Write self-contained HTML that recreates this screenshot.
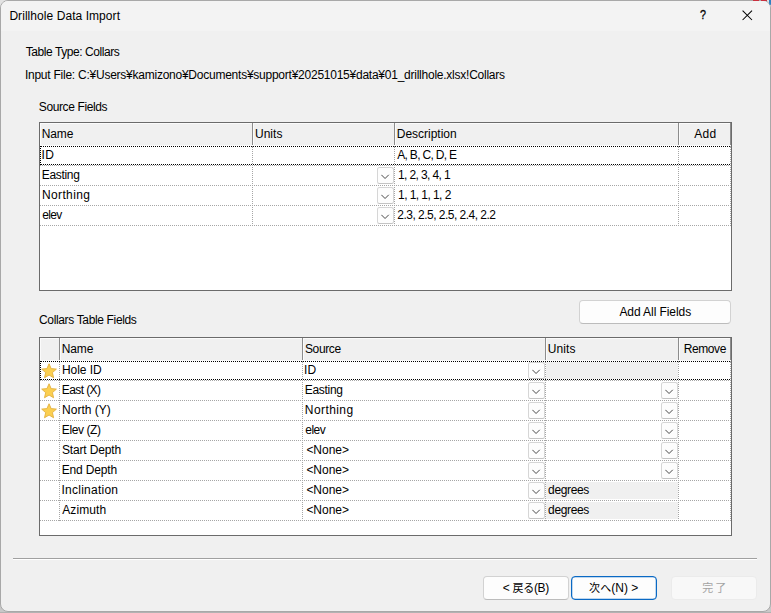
<!DOCTYPE html>
<html lang="ja">
<head>
<meta charset="utf-8">
<title>Drillhole Data Import</title>
<style>
*{box-sizing:border-box;margin:0;padding:0}
html,body{width:771px;height:613px;overflow:hidden;background:#e2e2e2}
body{font-family:"Liberation Sans","Noto Sans CJK JP",sans-serif;font-size:12px;color:#000;position:relative}
.win{position:absolute;left:0;top:0;width:771px;height:612px;background:#f0f0f0;border:1px solid #a8a8a8;border-radius:8px;overflow:hidden}
.shadow{position:absolute;left:0;top:603px;width:771px;height:10px;background:linear-gradient(to bottom,#c8c8c8 0,#c8c8c8 9px,#b2b2b2 9px,#b2b2b2 10px)}
.bit{position:absolute}
.tbar{position:absolute;left:0;top:0;width:769px;height:30px;background:#f3f3f3}
.t{position:absolute;white-space:nowrap;line-height:16px;height:16px}
.lv{position:absolute;background:#fff;border:1px solid #6b6b6b}
.hd{position:absolute;top:0;height:22px;background:#f0f0f0;box-shadow:inset 1px 1px 0 #fbfbfb;border-right:1px solid #8c8c8c;line-height:23px;padding-left:3px;white-space:nowrap}
.hd.c{text-align:center;padding-left:0}
.hb{position:absolute;left:0;top:22px;width:691px;height:1px;background:#fbfbfb}
.row{position:absolute;left:0;width:691px;height:20px;border-bottom:1px dotted #a6a6a6}
.cell{position:absolute;top:0;height:19px;line-height:19px;white-space:nowrap}
.vl{position:absolute;width:0;border-left:1px dotted #a6a6a6}
.focus{position:absolute;background:repeating-linear-gradient(90deg,transparent 0,transparent 1px,#000 1px,#000 2px) 0 0/100% 1px no-repeat,repeating-linear-gradient(90deg,transparent 0,transparent 1px,#000 1px,#000 2px) 0 100%/100% 1px no-repeat,repeating-linear-gradient(180deg,#000 0,#000 1px,transparent 1px,transparent 2px) 0 0/1px 100% no-repeat}
.dd{position:absolute;top:1px;width:17px;height:17px;border:1px solid #d6d6d6;border-bottom-color:#c4c4c4;border-radius:2.5px;background:#fdfdfd}
.dd svg{position:absolute;left:3px;top:6px}
.gray{position:absolute;background:#f0f0f0}
.btn{position:absolute;height:24px;border:1px solid #d2d2d2;border-bottom-color:#bcbcbc;border-radius:4px;background:#fdfdfd;text-align:center;line-height:22px;white-space:nowrap}
.btn.def{border:1px solid #0a69c4;box-shadow:inset 0 0 0 0.25px #0a69c4}
.j{font-size:11px;position:relative;top:-0.5px}
.btn.dis{color:#a3a3a3;background:#f8f8f8;border-color:#ebebeb}
.sep{position:absolute;left:12px;top:557px;width:744px;height:2px;border-top:1px solid #a0a0a0;border-bottom:1px solid #fff}
.star{position:absolute;left:1px;top:2px}
</style>
</head>
<body>
<div class="shadow"></div>
<div class="win">
<div class="tbar"></div>
<div class="t" id="title" style="left:9px;top:7px;letter-spacing:0.062px;margin-left:-0.64px;">Drillhole Data Import</div>
<div class="t" id="help" style="left:698.5px;top:6px;font-size:13.5px;-webkit-text-stroke:0.3px #000;transform:scaleX(0.8);transform-origin:0 0">?</div>
<svg style="position:absolute;left:741px;top:9px" width="11" height="11" viewBox="0 0 11 11"><path d="M0.6 0.6 L10 10 M10 0.6 L0.6 10" stroke="#000" stroke-width="1.05" fill="none"/></svg>
<div class="t" id="tt" style="left:24px;top:43px;letter-spacing:-0.436px;margin-left:0.78px;">Table Type: Collars</div>
<div class="t" id="inp" style="left:24px;top:66px;letter-spacing:-0.242px;margin-left:-0.11px;">Input File: C:¥Users¥kamizono¥Documents¥support¥20251015¥data¥01_drillhole.xlsx!Collars</div>
<div class="t" id="sf" style="left:38px;top:98px;letter-spacing:-0.384px;margin-left:-0.19px;">Source Fields</div>
<div class="lv" style="left:38px;top:121px;width:693px;height:169px">
<div class="hd" style="left:0;width:213px"><span id="h1name" style="letter-spacing:-0.166px;margin-right:0.166px;position:relative;left:-1.19px;">Name</span></div>
<div class="hd" style="left:213px;width:142px"><span id="h1units" style="letter-spacing:0.025px;margin-right:-0.025px;position:relative;left:-1.07px;">Units</span></div>
<div class="hd" style="left:355px;width:284px"><span id="h1desc" style="letter-spacing:-0.021px;margin-right:0.021px;position:relative;left:-1.19px;">Description</span></div>
<div class="hd c" style="left:639px;width:52px"><span id="h1add" style="letter-spacing:0.177px;margin-right:-0.177px;position:relative;left:0.72px;">Add</span></div>
<div class="hb"></div>
<div class="row" style="top:23px"><div class="cell" id="a0n" style="left:3px;letter-spacing:0.399px;margin-left:-1.59px;">ID</div><div class="cell" id="a0d" style="left:358px;letter-spacing:-0.694px;margin-left:-0.76px;">A, B, C, D, E</div></div>
<div class="row" style="top:43px"><div class="cell" id="a1n" style="left:3px;letter-spacing:-0.322px;margin-left:-1.25px;">Easting</div><div class="cell" id="a1d" style="left:358px;letter-spacing:-0.624px;margin-left:0.04px;">1, 2, 3, 4, 1</div><div class="dd" style="left:337px"><svg width="9" height="6" viewBox="0 0 9 6"><path d="M0.35 0.8 L4.05 4.5 L7.75 0.8" stroke="#333" stroke-width="0.9" fill="none"/></svg></div></div>
<div class="row" style="top:63px"><div class="cell" id="a2n" style="left:3px;letter-spacing:0.392px;margin-left:-1.14px;">Northing</div><div class="cell" id="a2d" style="left:358px;letter-spacing:-0.561px;margin-left:0.04px;">1, 1, 1, 1, 2</div><div class="dd" style="left:337px"><svg width="9" height="6" viewBox="0 0 9 6"><path d="M0.35 0.8 L4.05 4.5 L7.75 0.8" stroke="#333" stroke-width="0.9" fill="none"/></svg></div></div>
<div class="row" style="top:83px"><div class="cell" id="a3n" style="left:3px;letter-spacing:-0.724px;margin-left:-0.70px;">elev</div><div class="cell" id="a3d" style="left:358px;letter-spacing:-0.516px;margin-left:-0.73px;">2.3, 2.5, 2.5, 2.4, 2.2</div><div class="dd" style="left:337px"><svg width="9" height="6" viewBox="0 0 9 6"><path d="M0.35 0.8 L4.05 4.5 L7.75 0.8" stroke="#333" stroke-width="0.9" fill="none"/></svg></div></div>
<div class="vl" style="left:212px;top:23px;height:80px"></div>
<div class="vl" style="left:354px;top:23px;height:80px"></div>
<div class="vl" style="left:638px;top:23px;height:80px"></div>
<div class="vl" style="left:690px;top:23px;height:80px"></div>
<div class="focus" style="left:0;top:23px;width:690px;height:19px"></div>
</div>
<div class="btn" style="left:578px;top:299px;width:152px"><span id="addall" style="letter-spacing:-0.073px;margin-right:0.073px;position:relative;left:0.26px;">Add All Fields</span></div>
<div class="t" id="ctf" style="left:38px;top:311px;letter-spacing:-0.350px;margin-left:-0.01px;">Collars Table Fields</div>
<div class="lv" style="left:38px;top:336px;width:693px;height:199px">
<div class="hd" style="left:0;width:20px"></div>
<div class="hd" style="left:20px;width:243px"><span id="h2name" style="letter-spacing:-0.166px;margin-right:0.166px;position:relative;left:-1.19px;">Name</span></div>
<div class="hd" style="left:263px;width:243px"><span id="h2source" style="letter-spacing:-0.384px;margin-right:0.384px;position:relative;left:-1.03px;">Source</span></div>
<div class="hd" style="left:506px;width:133px"><span id="h2units" style="letter-spacing:0.115px;margin-right:-0.115px;position:relative;left:-1.39px;">Units</span></div>
<div class="hd c" style="left:639px;width:52px"><span id="h2remove" style="letter-spacing:-0.384px;margin-right:0.384px;position:relative;left:0.53px;">Remove</span></div>
<div class="hb"></div>
<div class="row" style="top:23px"><svg class="star" width="17" height="17" viewBox="0 0 17 17"><path d="M8.05 0.75 L10.15 5.62 L15.42 6.11 L11.44 9.60 L12.61 14.77 L8.05 12.06 L3.49 14.77 L4.66 9.60 L0.68 6.11 L5.95 5.62 Z" fill="#fbcf50" stroke="#e2b040" stroke-width="0.9" stroke-linejoin="round"/></svg><div class="cell" id="b0n" style="left:23px;letter-spacing:-0.029px;margin-left:-1.14px;">Hole ID</div><div class="cell" id="b0s" style="left:266px;letter-spacing:0.208px;margin-left:-1.97px;">ID</div><div class="dd" style="left:488px"><svg width="9" height="6" viewBox="0 0 9 6"><path d="M0.35 0.8 L4.05 4.5 L7.75 0.8" stroke="#333" stroke-width="0.9" fill="none"/></svg></div><div class="gray" style="left:506px;top:1px;width:132px;height:17px"></div></div>
<div class="row" style="top:43px"><svg class="star" width="17" height="17" viewBox="0 0 17 17"><path d="M8.05 0.75 L10.15 5.62 L15.42 6.11 L11.44 9.60 L12.61 14.77 L8.05 12.06 L3.49 14.77 L4.66 9.60 L0.68 6.11 L5.95 5.62 Z" fill="#fbcf50" stroke="#e2b040" stroke-width="0.9" stroke-linejoin="round"/></svg><div class="cell" id="b1n" style="left:23px;letter-spacing:-0.598px;margin-left:-1.20px;">East (X)</div><div class="cell" id="b1s" style="left:266px;letter-spacing:-0.310px;margin-left:-1.19px;">Easting</div><div class="dd" style="left:488px"><svg width="9" height="6" viewBox="0 0 9 6"><path d="M0.35 0.8 L4.05 4.5 L7.75 0.8" stroke="#333" stroke-width="0.9" fill="none"/></svg></div><div class="dd" style="left:621px"><svg width="9" height="6" viewBox="0 0 9 6"><path d="M0.35 0.8 L4.05 4.5 L7.75 0.8" stroke="#333" stroke-width="0.9" fill="none"/></svg></div></div>
<div class="row" style="top:63px"><svg class="star" width="17" height="17" viewBox="0 0 17 17"><path d="M8.05 0.75 L10.15 5.62 L15.42 6.11 L11.44 9.60 L12.61 14.77 L8.05 12.06 L3.49 14.77 L4.66 9.60 L0.68 6.11 L5.95 5.62 Z" fill="#fbcf50" stroke="#e2b040" stroke-width="0.9" stroke-linejoin="round"/></svg><div class="cell" id="b2n" style="left:23px;letter-spacing:-0.007px;margin-left:-0.93px;">North (Y)</div><div class="cell" id="b2s" style="left:266px;letter-spacing:0.417px;margin-left:-1.15px;">Northing</div><div class="dd" style="left:488px"><svg width="9" height="6" viewBox="0 0 9 6"><path d="M0.35 0.8 L4.05 4.5 L7.75 0.8" stroke="#333" stroke-width="0.9" fill="none"/></svg></div><div class="dd" style="left:621px"><svg width="9" height="6" viewBox="0 0 9 6"><path d="M0.35 0.8 L4.05 4.5 L7.75 0.8" stroke="#333" stroke-width="0.9" fill="none"/></svg></div></div>
<div class="row" style="top:83px"><div class="cell" id="b3n" style="left:23px;letter-spacing:-0.421px;margin-left:-1.15px;">Elev (Z)</div><div class="cell" id="b3s" style="left:266px;letter-spacing:-0.474px;margin-left:-0.81px;">elev</div><div class="dd" style="left:488px"><svg width="9" height="6" viewBox="0 0 9 6"><path d="M0.35 0.8 L4.05 4.5 L7.75 0.8" stroke="#333" stroke-width="0.9" fill="none"/></svg></div><div class="dd" style="left:621px"><svg width="9" height="6" viewBox="0 0 9 6"><path d="M0.35 0.8 L4.05 4.5 L7.75 0.8" stroke="#333" stroke-width="0.9" fill="none"/></svg></div></div>
<div class="row" style="top:103px"><div class="cell" id="b4n" style="left:23px;letter-spacing:-0.157px;margin-left:-1.02px;">Start Depth</div><div class="cell" id="b4s" style="left:266px;letter-spacing:-0.029px;margin-left:0.38px;">&lt;None&gt;</div><div class="dd" style="left:488px"><svg width="9" height="6" viewBox="0 0 9 6"><path d="M0.35 0.8 L4.05 4.5 L7.75 0.8" stroke="#333" stroke-width="0.9" fill="none"/></svg></div><div class="dd" style="left:621px"><svg width="9" height="6" viewBox="0 0 9 6"><path d="M0.35 0.8 L4.05 4.5 L7.75 0.8" stroke="#333" stroke-width="0.9" fill="none"/></svg></div></div>
<div class="row" style="top:123px"><div class="cell" id="b5n" style="left:23px;letter-spacing:-0.175px;margin-left:-1.25px;">End Depth</div><div class="cell" id="b5s" style="left:266px;letter-spacing:-0.029px;margin-left:0.38px;">&lt;None&gt;</div><div class="dd" style="left:488px"><svg width="9" height="6" viewBox="0 0 9 6"><path d="M0.35 0.8 L4.05 4.5 L7.75 0.8" stroke="#333" stroke-width="0.9" fill="none"/></svg></div><div class="dd" style="left:621px"><svg width="9" height="6" viewBox="0 0 9 6"><path d="M0.35 0.8 L4.05 4.5 L7.75 0.8" stroke="#333" stroke-width="0.9" fill="none"/></svg></div></div>
<div class="row" style="top:143px"><div class="cell" id="b6n" style="left:23px;letter-spacing:0.245px;margin-left:-1.51px;">Inclination</div><div class="cell" id="b6s" style="left:266px;letter-spacing:-0.029px;margin-left:0.38px;">&lt;None&gt;</div><div class="dd" style="left:488px"><svg width="9" height="6" viewBox="0 0 9 6"><path d="M0.35 0.8 L4.05 4.5 L7.75 0.8" stroke="#333" stroke-width="0.9" fill="none"/></svg></div><div class="gray" style="left:506px;top:1px;width:132px;height:17px"></div><div class="cell" id="b6u" style="left:509px;letter-spacing:-0.355px;margin-left:-0.92px;">degrees</div></div>
<div class="row" style="top:163px"><div class="cell" id="b7n" style="left:23px;letter-spacing:0.099px;margin-left:-0.79px;">Azimuth</div><div class="cell" id="b7s" style="left:266px;letter-spacing:-0.029px;margin-left:0.38px;">&lt;None&gt;</div><div class="dd" style="left:488px"><svg width="9" height="6" viewBox="0 0 9 6"><path d="M0.35 0.8 L4.05 4.5 L7.75 0.8" stroke="#333" stroke-width="0.9" fill="none"/></svg></div><div class="gray" style="left:506px;top:1px;width:132px;height:17px"></div><div class="cell" id="b7u" style="left:509px;letter-spacing:-0.355px;margin-left:-0.92px;">degrees</div></div>
<div class="vl" style="left:19px;top:23px;height:160px"></div>
<div class="vl" style="left:262px;top:23px;height:160px"></div>
<div class="vl" style="left:505px;top:23px;height:160px"></div>
<div class="vl" style="left:638px;top:23px;height:160px"></div>
<div class="vl" style="left:690px;top:23px;height:160px"></div>
<div class="focus" style="left:0;top:23px;width:690px;height:19px"></div>
</div>
<div class="sep"></div>
<div class="btn" style="left:482px;top:575px;width:86px"><span id="back" style="letter-spacing:-0.315px;margin-right:0.315px;position:relative;left:0.08px;">&lt; <span class=j>戻る</span>(B)</span></div>
<div class="btn def" style="left:570px;top:575px;width:86px"><span id="next" style="letter-spacing:0.038px;margin-right:-0.038px;position:relative;left:-0.29px;"><span class=j>次へ</span>(N) &gt;</span></div>
<div class="btn dis" style="left:670px;top:575px;width:86px"><span id="finish" style="letter-spacing:1.989px;margin-right:-1.989px;position:relative;left:0.20px;"><span class=j>完了</span></span></div>
</div>
<div class="bit" style="left:753px;top:0;width:6px;height:1px;background:#c9303f"></div><div class="bit" style="left:761px;top:0;width:6px;height:1px;background:#c9303f"></div><div class="bit" style="left:769px;top:0;width:2px;height:5px;background:#2f80c2;border-radius:0 0 0 2px"></div>
</body>
</html>
